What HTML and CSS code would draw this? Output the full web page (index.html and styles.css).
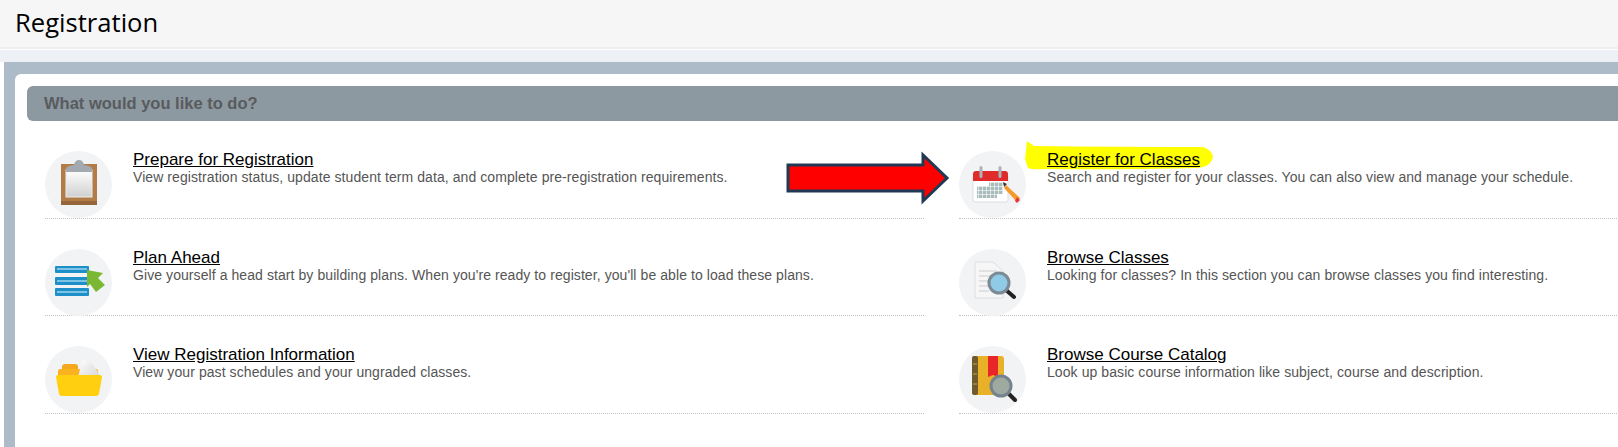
FILE: index.html
```html
<!DOCTYPE html>
<html lang="en">
<head>
    <meta charset="UTF-8">
    <meta name="viewport" content="width=device-width, initial-scale=1.0">
    <title>Registration</title>
    <link rel="stylesheet" href="styles.css">
</head>
<body>
    <header class="page-header">
        <h1>Registration</h1>
    </header>

    <div class="strip"></div>

    <main class="frame">
        <div class="panel">
            <h2 class="panel-title">What would you like to do?</h2>

            <div class="options">
                <div class="option">
                    <div class="icon">
                        <svg width="67" height="67" viewBox="0 0 67 67">
                            <defs>
                                <linearGradient id="paper" x1="0" y1="0" x2="0" y2="1">
                                    <stop offset="0" stop-color="#ffffff"/>
                                    <stop offset="1" stop-color="#d0d0d0"/>
                                </linearGradient>
                            </defs>
                            <rect x="16" y="13" width="36" height="41" fill="#b27c48"/>
                            <rect x="16" y="50" width="36" height="4" fill="#96663a"/>
                            <rect x="21" y="19" width="26" height="27" fill="url(#paper)" stroke="#eeeeee"/>
                            <path d="M21 21 v-3 q0-2 3-3 l5-1 q1-5 5-5 t5 5 l5 1 q3 1 3 3 v3 z" fill="#a3a9b0"/>
                        </svg>
                    </div>
                    <div class="option-text">
                        <a class="option-link" href="#">Prepare for Registration</a>
                        <p>View registration status, update student term data, and complete pre-registration requirements.</p>
                    </div>
                </div>

                <div class="option">
                    <svg class="arrow" width="166" height="56" viewBox="0 0 166 56">
                        <path d="M2 15 H137 V5 L161 28 L137 51 V41 H2 Z" fill="#ff0000" stroke="#203a56" stroke-width="3"/>
                    </svg>
                    <div class="icon">
                        <svg width="67" height="67" viewBox="0 0 67 67">
                            <defs>
                                <pattern id="cells" width="4" height="4" patternUnits="userSpaceOnUse">
                                    <rect width="3.400" height="3.400" fill="#a9bcbc"/>
                                </pattern>
                            </defs>
                            <rect x="14" y="24" width="35" height="27" rx="2" fill="#fff" stroke="#dddddd"/>
                            <path d="M14 30 v-7 q0-3 3-3 h29 q3 0 3 3 v7 z" fill="#e02b2b"/>
                            <rect x="20.500" y="15" width="3" height="12" rx="1.500" fill="#a9b4bb"/>
                            <rect x="39.500" y="15" width="3" height="12" rx="1.500" fill="#a9b4bb"/>
                            <path d="M18 35 h12 v-4 h14 v12 h-6 v4 h-20 z" fill="url(#cells)"/>
                            <path d="M47 34 l14 13 l-3 4 l-13-14 z" fill="#f49a2a"/>
                            <path d="M58 46 l3 3 l-3 3 l-2-2 z" fill="#e23a3a"/>
                            <path d="M44 31 l4 2 l-3 3 z" fill="#333"/>
                        </svg>
                    </div>
                    <div class="option-text">
                        <a class="option-link" href="#">
                            <svg class="marker" width="190" height="31" viewBox="0 0 190 31">
                                <path d="M2 0 L9 5 Q90 6 178 6 Q187 9 188 16 Q186 26 172 27 Q90 29 20 28 Q8 29 3 27 L0 18 Z" fill="#ffff00"/>
                            </svg>
                            <span>Register for Classes</span>
                        </a>
                        <p>Search and register for your classes. You can also view and manage your schedule.</p>
                    </div>
                </div>

                <div class="option">
                    <div class="icon">
                        <svg width="67" height="67" viewBox="0 0 67 67">
                            <rect x="10" y="17" width="34" height="7" rx="1" fill="#1e8fc8"/>
                            <rect x="10" y="28" width="34" height="8" rx="1" fill="#1e8fc8"/>
                            <rect x="10" y="39" width="34" height="8" rx="1" fill="#1e8fc8"/>
                            <rect x="12" y="19" width="30" height="2" fill="#7cc4e6"/>
                            <rect x="12" y="31" width="30" height="2" fill="#7cc4e6"/>
                            <rect x="12" y="42" width="30" height="2" fill="#7cc4e6"/>
                            <path d="M42 21 L58 24 L53 29 L60 36 L51 43 L45 35 L42 38 Z" fill="#7ab833"/>
                        </svg>
                    </div>
                    <div class="option-text">
                        <a class="option-link" href="#">Plan Ahead</a>
                        <p>Give yourself a head start by building plans. When you're ready to register, you'll be able to load these plans.</p>
                    </div>
                </div>

                <div class="option">
                    <div class="icon">
                        <svg width="67" height="67" viewBox="0 0 67 67">
                            <path d="M16 13 H34 L44 22 V49 H16 Z" fill="#f6f6f6" stroke="#dedede"/>
                            <path d="M20 22 H38 M20 27 H34 M20 32 H30 M20 37 H29 M20 42 H30" stroke="#dadada" stroke-width="1.500"/>
                            <path d="M47 41 L55 48" stroke="#222" stroke-width="4" stroke-linecap="round"/>
                            <circle cx="40" cy="34" r="10" fill="#8fcbe6" stroke="#7b8a94" stroke-width="3"/>
                        </svg>
                    </div>
                    <div class="option-text">
                        <a class="option-link" href="#">Browse Classes</a>
                        <p>Looking for classes? In this section you can browse classes you find interesting.</p>
                    </div>
                </div>

                <div class="option">
                    <div class="icon">
                        <svg width="67" height="67" viewBox="0 0 67 67">
                            <defs>
                                <linearGradient id="sheet" x1="0" y1="0" x2="1" y2="1">
                                    <stop offset="0" stop-color="#ffffff"/>
                                    <stop offset="1" stop-color="#d5d5d5"/>
                                </linearGradient>
                            </defs>
                            <rect x="17" y="18" width="16" height="12" rx="3" fill="#f4a81e"/>
                            <rect x="13" y="23" width="40" height="8" rx="2" fill="#fbb220"/>
                            <path d="M37 14 L47 17 L54 28 L54 32 L33 32 Z" fill="url(#sheet)"/>
                            <path d="M13 29 H55 Q57 29 57 31 L54 48 Q53 50 51 50 H17 Q15 50 14 48 L11 31 Q11 29 13 29 Z" fill="#ffcf10"/>
                        </svg>
                    </div>
                    <div class="option-text">
                        <a class="option-link" href="#">View Registration Information</a>
                        <p>View your past schedules and your ungraded classes.</p>
                    </div>
                </div>

                <div class="option">
                    <div class="icon">
                        <svg width="67" height="67" viewBox="0 0 67 67">
                            <rect x="13" y="10" width="32" height="39" rx="3" fill="#e9b128"/>
                            <rect x="13" y="10" width="6" height="39" rx="2" fill="#6e5a2c"/>
                            <path d="M14 18 H18 M14 28 H18 M14 38 H18" stroke="#c9a23c" stroke-width="1"/>
                            <path d="M29 10 H39 V31 L34 29 L29 31 Z" fill="#e8262a"/>
                            <path d="M50 48 L56 54" stroke="#222" stroke-width="4" stroke-linecap="round"/>
                            <circle cx="42" cy="40" r="10" fill="#9eaaa0" stroke="#75838e" stroke-width="3"/>
                        </svg>
                    </div>
                    <div class="option-text">
                        <a class="option-link" href="#">Browse Course Catalog</a>
                        <p>Look up basic course information like subject, course and description.</p>
                    </div>
                </div>
            </div>
        </div>
    </main>
</body>
</html>
```

FILE: styles.css
```css
body {
    margin: 0;
    height: 447px;
    background-color: #fff;
    font-family: 'Liberation Sans', Arial, sans-serif;
    overflow: hidden;
}

/* Header */
.page-header {
    height: 47px;
    background-color: #f6f6f6;
    border-bottom: 2px solid #eeeeee;
}

.page-header h1 {
    margin: 0;
    padding-left: 15px;
    font-family: 'Open Sans', sans-serif;
    font-size: 25.600px;
    font-weight: 400;
    line-height: 46px;
    color: #000;
}

.strip {
    height: 12px;
    margin-top: 1px;
    background-color: #edf1f5;
}

/* Panel */
.frame {
    height: 385px;
    box-sizing: border-box;
    margin-left: 4px;
    padding: 12px 0 0 11px;
    background-color: #adbbc9;
    overflow: hidden;
}

.panel {
    width: 1680px;
    height: 373px;
    box-sizing: border-box;
    padding: 12px;
    background-color: #fff;
    border-radius: 6px 0 0 0;
}

.panel-title {
    height: 35px;
    margin: 0;
    padding-left: 17px;
    background-color: #8d99a1;
    border-radius: 6px;
    font-size: 16.500px;
    font-weight: bold;
    line-height: 35px;
    color: #595b5e;
}

/* Options */
.options {
    display: grid;
    grid-template-columns: 879px 720px;
    grid-auto-rows: 97.500px;
    column-gap: 35px;
    padding-left: 18px;
}

.option {
    position: relative;
    display: flex;
    gap: 21px;
    box-sizing: border-box;
    padding-top: 30px;
    border-bottom: 1px dotted #c2c2c2;
}

.icon {
    flex: none;
    width: 67px;
    height: 67px;
    border-radius: 50%;
    background-color: #f2f3f5;
}

.icon svg {
    display: block;
    filter: blur(0.4px);
}

.option-link {
    position: relative;
    display: inline-block;
    font-size: 17px;
    line-height: 17px;
    color: #000;
    text-decoration: underline;
}

.option-link span {
    position: relative;
}

.option-text p {
    margin: 0;
    font-size: 14px;
    line-height: 16px;
    letter-spacing: 0.077px;
    color: #555;
}

/* Annotations added over the screenshot */
.marker {
    position: absolute;
    left: -22px;
    top: -10px;
}

.arrow {
    position: absolute;
    left: -173px;
    top: 29px;
}
```
